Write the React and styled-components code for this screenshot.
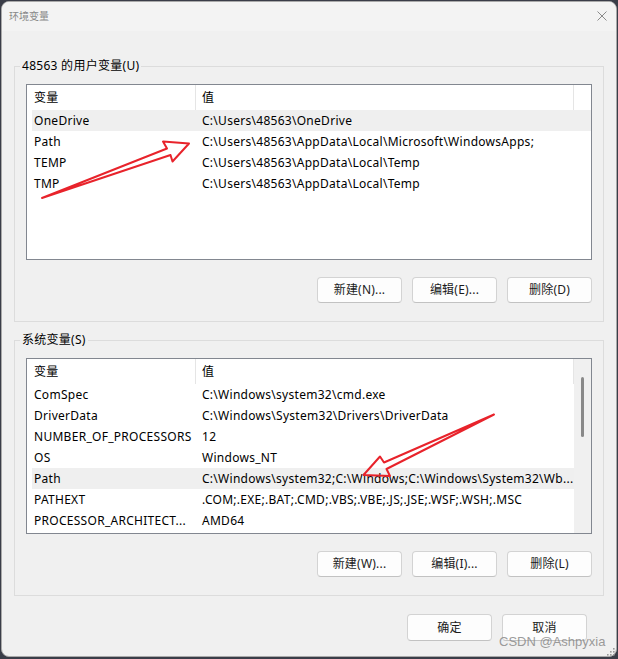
import React from "react";
import styled, { createGlobalStyle } from "styled-components";

const UI_FONT = `"Noto Sans", "Noto Sans CJK SC", sans-serif`;

const GlobalStyle = createGlobalStyle`
  html, body { margin: 0; padding: 0; }
  body {
    background: #3a3d48;
    font-family: ${UI_FONT};
  }
`;

const Desktop = styled.div`
  position: relative;
  width: 618px;
  height: 659px;
  box-sizing: border-box;
  padding: 1px 0 0 1px;
  overflow: hidden;
`;

const Window = styled.div`
  width: 616px;
  height: 656px;
  box-sizing: border-box;
  border: 1px solid #a9a9a9;
  border-radius: 8px;
  background: #f0f0f0;
  overflow: hidden;
  display: flex;
  flex-direction: column;
  font: 12px/16px ${UI_FONT};
  letter-spacing: 0.28px;
  color: #000;
`;

const TitleBar = styled.div`
  flex: none;
  height: 29px;
  box-sizing: border-box;
  padding: 0 9px 1px 7px;
  display: flex;
  align-items: center;
  justify-content: space-between;
  background: #f3f3f3;
`;

const Title = styled.span`
  font-size: 10px;
  letter-spacing: 0;
  color: #888;
`;

const CloseIcon = () => (
  <svg width="10" height="10" viewBox="0 0 10 10">
    <path d="M0.5 0.5 L9.5 9.5 M9.5 0.5 L0.5 9.5" stroke="#8a8a8a" strokeWidth="1" fill="none" />
  </svg>
);

const DialogBody = styled.div`
  flex: 1;
  display: flex;
  flex-direction: column;
  padding: 27px 12px 0;
`;

const GroupBox = styled.fieldset`
  margin: 0;
  min-width: 0;
  padding: 10px 11px 18px;
  border: 1px solid #dcdcdc;
  & + & {
    margin-top: 10px;
  }
`;

const GroupLegend = styled.legend`
  padding: 0 2px;
  margin-left: -6px;
  font-size: 12px;
  line-height: 16px;
`;

const ListView = styled.div`
  height: 176px;
  box-sizing: border-box;
  border: 1px solid #828790;
  background: #fff;
  display: flex;
  overflow: hidden;
`;

const ListPane = styled.div`
  flex: 1;
  min-width: 0;
  padding-left: 5px;
  overflow: hidden;
`;

const GridRow = styled.div`
  display: grid;
  grid-template-columns: 164px 378px;
  height: ${(p) => (p.$header ? 25 : 21)}px;
  background: ${(p) => (p.$selected ? "#efefef" : "transparent")};
`;

const Cell = styled.div`
  display: flex;
  align-items: center;
  padding-left: ${(p) => (p.$first ? 2 : 6)}px;
  white-space: nowrap;
  overflow: hidden;
  border-right: ${(p) => (p.$header ? "1px solid #e5e5e5" : "none")};
`;

const ScrollTrack = styled.div`
  flex: none;
  width: 17px;
  background: #f0f0f0;
  display: flex;
  justify-content: center;
  align-items: flex-start;
`;

const ScrollThumb = styled.div`
  width: 3px;
  height: 60px;
  margin-top: 18px;
  border-radius: 2px;
  background: #898989;
`;

const ButtonRow = styled.div`
  display: flex;
  justify-content: flex-end;
  gap: ${(p) => p.$gap || 10}px;
  margin-top: ${(p) => p.$top || 17}px;
  padding-right: ${(p) => p.$right || 0}px;
`;

const PushButton = styled.button`
  width: 85px;
  height: ${(p) => (p.$tall ? 27 : 26)}px;
  box-sizing: border-box;
  padding: 0;
  border: 1px solid #d3d3d3;
  border-bottom-color: #c2c2c2;
  border-radius: 4px;
  background: #fdfdfd;
  font: 12px/16px ${UI_FONT};
  letter-spacing: 0.2px;
  color: #1b1b1b;
`;

const Watermark = styled.div`
  position: absolute;
  left: 499px;
  top: 634px;
  font: 13px/16px "Liberation Sans", Arial, sans-serif;
  color: rgba(130, 130, 130, 0.8);
  white-space: nowrap;
  pointer-events: none;
`;

const Grip = styled.svg`
  position: absolute;
  left: 606px;
  top: 647px;
`;

const Annotations = styled.svg`
  position: absolute;
  left: 0;
  top: 0;
  pointer-events: none;
`;

const userVars = [
  ["OneDrive", "C:\\Users\\48563\\OneDrive"],
  ["Path", "C:\\Users\\48563\\AppData\\Local\\Microsoft\\WindowsApps;"],
  ["TEMP", "C:\\Users\\48563\\AppData\\Local\\Temp"],
  ["TMP", "C:\\Users\\48563\\AppData\\Local\\Temp"],
];

// the rows that fit the system list's visible area
const systemVars = [
  ["ComSpec", "C:\\Windows\\system32\\cmd.exe"],
  ["DriverData", "C:\\Windows\\System32\\Drivers\\DriverData"],
  ["NUMBER_OF_PROCESSORS", "12"],
  ["OS", "Windows_NT"],
  ["Path", "C:\\Windows\\system32;C:\\Windows;C:\\Windows\\System32\\Wb..."],
  ["PATHEXT", ".COM;.EXE;.BAT;.CMD;.VBS;.VBE;.JS;.JSE;.WSF;.WSH;.MSC"],
  ["PROCESSOR_ARCHITECT...", "AMD64"],
];

function VariableList({ rows, selected, scrollable }) {
  return (
    <ListView>
      <ListPane>
        <GridRow $header>
          <Cell $header $first>变量</Cell>
          <Cell $header>值</Cell>
        </GridRow>
        {rows.map(([name, value], i) => (
          <GridRow key={name + i} $selected={i === selected}>
            <Cell $first>{name}</Cell>
            <Cell>{value}</Cell>
          </GridRow>
        ))}
      </ListPane>
      {scrollable && (
        <ScrollTrack>
          <ScrollThumb />
        </ScrollTrack>
      )}
    </ListView>
  );
}

function VariableGroup({ title, rows, selected, scrollable, keys }) {
  return (
    <GroupBox>
      <GroupLegend>{title}</GroupLegend>
      <VariableList rows={rows} selected={selected} scrollable={scrollable} />
      <ButtonRow>
        <PushButton>新建({keys[0]})...</PushButton>
        <PushButton>编辑({keys[1]})...</PushButton>
        <PushButton>删除({keys[2]})</PushButton>
      </ButtonRow>
    </GroupBox>
  );
}

export default function App() {
  return (
    <Desktop>
      <GlobalStyle />
      <Window>
        <TitleBar>
          <Title>环境变量</Title>
          <CloseIcon />
        </TitleBar>
        <DialogBody>
          <VariableGroup
            title="48563 的用户变量(U)"
            rows={userVars}
            selected={0}
            keys={["N", "E", "D"]}
          />
          <VariableGroup
            title="系统变量(S)"
            rows={systemVars}
            selected={4}
            scrollable
            keys={["W", "I", "L"]}
          />
          <ButtonRow $top={18} $right={17}>
            <PushButton $tall>确定</PushButton>
            <PushButton $tall>取消</PushButton>
          </ButtonRow>
        </DialogBody>
      </Window>

      <Watermark>CSDN @Ashpyxia</Watermark>

      <Grip width="10" height="10" viewBox="0 0 10 10">
        {[
          [7, 1],
          [4, 4],
          [7, 4],
          [1, 7],
          [4, 7],
          [7, 7],
        ].map(([x, y]) => (
          <rect key={`${x}-${y}`} x={x} y={y} width="1.6" height="1.6" fill="#9a9a9a" />
        ))}
      </Grip>

      <Annotations width="618" height="659" viewBox="0 0 618 659">
        <g fill="none" stroke="#e8232b" strokeWidth="2" strokeLinejoin="round" strokeLinecap="round">
          <path d="M42 198 L167 148.5 L163 141.5 L189 143.5 L172.5 161.5 L170.5 155 Z" />
          <path d="M494 414.5 L384 462.5 L380 456.5 L363.5 475 L390 476 L386.5 469 Z" />
        </g>
      </Annotations>
    </Desktop>
  );
}
